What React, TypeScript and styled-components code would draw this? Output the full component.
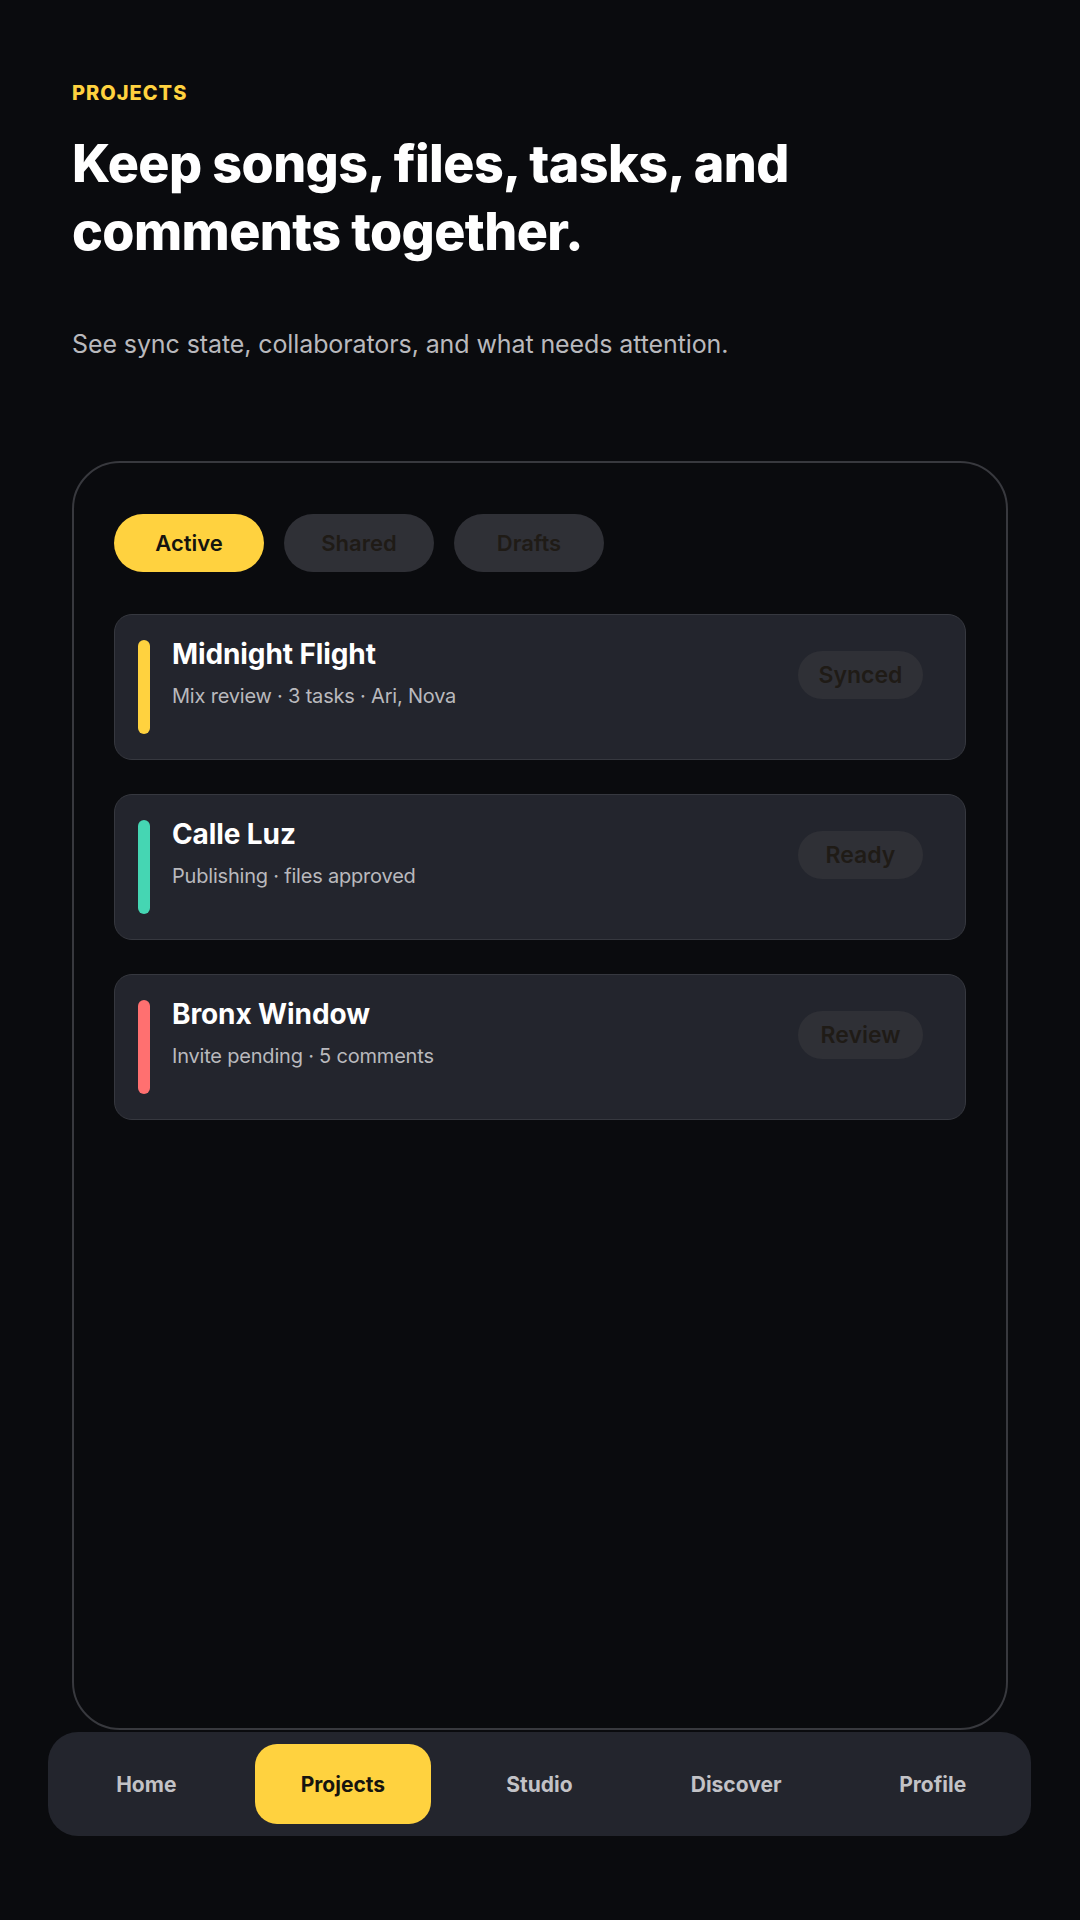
import { createGlobalStyle, styled } from "styled-components";

const GlobalStyle = createGlobalStyle`
  html, body {
    margin: 0;
    padding: 0;
    background: #0a0b0e;
  }
  body {
    font-family: Inter, "Noto Sans", "Liberation Sans", sans-serif;
    color: #ffffff;
  }
  * {
    box-sizing: border-box;
  }
`;

interface Project {
  title: string;
  meta: string;
  status: string;
  color: string;
}

const projects: Project[] = [
  {
    title: "Midnight Flight",
    meta: "Mix review · 3 tasks · Ari, Nova",
    status: "Synced",
    color: "#ffd23f",
  },
  {
    title: "Calle Luz",
    meta: "Publishing · files approved",
    status: "Ready",
    color: "#45d6b3",
  },
  {
    title: "Bronx Window",
    meta: "Invite pending · 5 comments",
    status: "Review",
    color: "#ff7070",
  },
];

const tabs = ["Active", "Shared", "Drafts"];
const navItems = ["Home", "Projects", "Studio", "Discover", "Profile"];

const Screen = styled.div`
  width: 1080px;
  height: 1920px;
  display: flex;
  flex-direction: column;
  padding-bottom: 84px;
`;

const Header = styled.header`
  padding: 76px 72px 0;
`;

const Eyebrow = styled.div`
  font-size: 20px;
  font-weight: 800;
  letter-spacing: 1px;
  color: #ffd23f;
  line-height: 34px;
`;

const Title = styled.h1`
  margin: 20px 0 0;
  font-size: 52px;
  font-weight: 800;
  line-height: 68px;
  letter-spacing: -0.6px;
  color: #ffffff;
`;

const Lead = styled.p`
  margin: 60px 0 0;
  font-size: 25px;
  line-height: 36px;
  letter-spacing: -0.1px;
  color: #b9b9bd;
`;

const Panel = styled.section`
  flex: 1;
  margin: 99px 72px 0;
  border: 2px solid #38393e;
  border-radius: 48px;
  padding: 51px 40px 40px;
  display: flex;
  flex-direction: column;
`;

const TabRow = styled.div`
  display: flex;
  gap: 20px;
`;

const Tab = styled.button<{ $active?: boolean }>`
  width: 150px;
  height: 58px;
  border: none;
  border-radius: 29px;
  font-family: inherit;
  font-size: 22px;
  font-weight: 600;
  background: ${(p) => (p.$active ? "#ffd23f" : "#2f3036")};
  color: ${(p) => (p.$active ? "#16140f" : "#1f1b16")};
`;

const CardList = styled.div`
  margin-top: 42px;
  display: flex;
  flex-direction: column;
  gap: 34px;
`;

const Card = styled.div`
  display: flex;
  gap: 22px;
  padding: 25px 42px 25px 23px;
  background: #23252d;
  border: 1px solid #36383f;
  border-radius: 18px;
`;

const Accent = styled.div<{ $color: string }>`
  width: 12px;
  height: 94px;
  flex-shrink: 0;
  border-radius: 6px;
  background: ${(p) => p.$color};
`;

const CardBody = styled.div`
  flex: 1;
  display: flex;
  align-items: flex-start;
  justify-content: space-between;
`;

const CardText = styled.div`
  margin-top: -3px;
`;

const CardTitle = styled.div`
  font-size: 28px;
  font-weight: 700;
  line-height: 34px;
  letter-spacing: -0.1px;
  color: #ffffff;
`;

const CardMeta = styled.div`
  margin-top: 10px;
  font-size: 20px;
  line-height: 30px;
  letter-spacing: -0.2px;
  color: #b9b9bd;
`;

const Badge = styled.div`
  margin-top: 11px;
  width: 125px;
  height: 48px;
  border-radius: 24px;
  background: #2f3036;
  color: #1f1b16;
  font-size: 23px;
  font-weight: 600;
  display: flex;
  align-items: center;
  justify-content: center;
`;

const Nav = styled.nav`
  margin: 2px 49px 0 48px;
  height: 104px;
  padding: 12px 10px;
  background: #23252d;
  border-radius: 30px;
  display: grid;
  grid-template-columns: repeat(5, 1fr);
  gap: 20px;
`;

const NavItem = styled.div<{ $active?: boolean }>`
  display: flex;
  align-items: center;
  justify-content: center;
  border-radius: 22px;
  font-size: 21px;
  font-weight: 700;
  background: ${(p) => (p.$active ? "#ffd23f" : "transparent")};
  color: ${(p) => (p.$active ? "#16140f" : "#c2c2c6")};
`;

export default function App() {
  return (
    <>
      <GlobalStyle />
      <Screen>
        <Header>
          <Eyebrow>PROJECTS</Eyebrow>
          <Title>
            Keep songs, files, tasks, and
            <br />
            comments together.
          </Title>
          <Lead>See sync state, collaborators, and what needs attention.</Lead>
        </Header>
        <Panel>
          <TabRow>
            {tabs.map((t, i) => (
              <Tab key={t} $active={i === 0}>
                {t}
              </Tab>
            ))}
          </TabRow>
          <CardList>
            {projects.map((p) => (
              <Card key={p.title}>
                <Accent $color={p.color} />
                <CardBody>
                  <CardText>
                    <CardTitle>{p.title}</CardTitle>
                    <CardMeta>{p.meta}</CardMeta>
                  </CardText>
                  <Badge>{p.status}</Badge>
                </CardBody>
              </Card>
            ))}
          </CardList>
        </Panel>
        <Nav>
          {navItems.map((n) => (
            <NavItem key={n} $active={n === "Projects"}>
              {n}
            </NavItem>
          ))}
        </Nav>
      </Screen>
    </>
  );
}
